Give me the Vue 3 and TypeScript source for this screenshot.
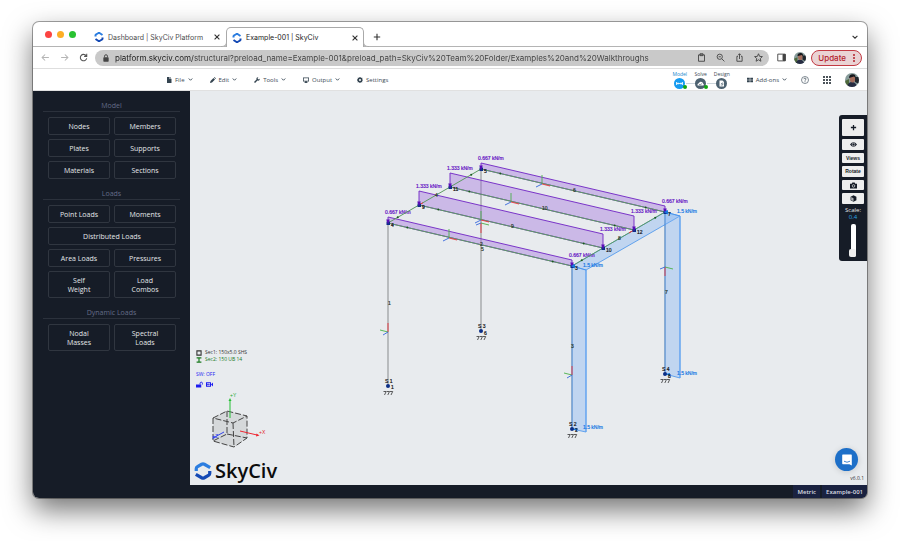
<script setup lang="ts">
import { ref } from 'vue'

type Point = [number, number]

interface MenuItem { label: string; icon: string; caret: boolean }
interface PanelButton { label: string; wide?: boolean; tall?: boolean }
interface PanelSection { title: string; buttons: PanelButton[] }
interface Beam { from: Point; to: Point; rise: Point; load: string }
interface Label { at: Point; text: string }
interface Triad { at: Point; red: Point; green: Point; blue: Point }

const address = ref('platform.skyciv.com/structural?preload_name=Example-001&preload_path=SkyCiv%20Team%20Folder/Examples%20and%20Walkthroughs')
const scale = ref(0.4)

const tabs = [
  { title: 'Dashboard | SkyCiv Platform', active: false },
  { title: 'Example-001 | SkyCiv', active: true },
]

const menus: MenuItem[] = [
  { label: 'File', icon: 'M2 0h5v4h4v8H2zM8 0l3 3H8z', caret: true },
  { label: 'Edit', icon: 'M0 12l1-4 6-6 3 3-6 6zM8 1l1-1 3 3-1 1z', caret: true },
  { label: 'Tools', icon: 'M0 10l5-5C4 2 6 0 9 0L7 2l1 2 2 1 2-2c0 3-2 5-5 4l-5 5z', caret: true },
  { label: 'Output', icon: 'M0 1h12v8H7.500v1.500H9V12H3v-1.500h1.500V9H0zM1.500 2.500v5h9v-5z', caret: true },
  { label: 'Settings', icon: 'M5 0h2l.4 1.600 1.200.5L10 1.200 11 2.500l-1 1.300.5 1.200 1.500.3v1.500l-1.500.4-.5 1.200L10.800 10l-1 1-1.400-.9-1.200.5L7 12H5l-.4-1.500-1.200-.5-1.400.9-1-1 .9-1.400-.5-1.200L0 7V5l1.500-.4L2 3.500 1.200 2l1-1 1.300.9 1.100-.4zM6 4a2 2 0 100 4 2 2 0 000-4z', caret: false },
]

const sections: PanelSection[] = [
  {
    title: 'Model',
    buttons: [
      { label: 'Nodes' }, { label: 'Members' }, { label: 'Plates' },
      { label: 'Supports' }, { label: 'Materials' }, { label: 'Sections' },
    ],
  },
  {
    title: 'Loads',
    buttons: [
      { label: 'Point Loads' }, { label: 'Moments' }, { label: 'Distributed Loads', wide: true },
      { label: 'Area Loads' }, { label: 'Pressures' },
      { label: 'Self Weight', tall: true }, { label: 'Load Combos', tall: true },
    ],
  },
  {
    title: 'Dynamic Loads',
    buttons: [{ label: 'Nodal Masses', tall: true }, { label: 'Spectral Loads', tall: true }],
  },
]

const beams: Beam[] = [
  { from: [481, 169], to: [665, 212], rise: [6, 6], load: '0.667 kN/m' },
  { from: [450, 187], to: [634, 230], rise: [14, 14], load: '1.333 kN/m' },
  { from: [419, 205], to: [603, 248], rise: [14, 14], load: '1.333 kN/m' },
  { from: [388, 223], to: [572, 266], rise: [6, 6], load: '0.667 kN/m' },
]

const columns: [Point, Point][] = [
  [[388, 223], [388, 386]],
  [[481, 169], [481, 331]],
  [[572, 266], [572, 429]],
  [[665, 212], [665, 374]],
]

const girders: [Point, Point][] = [
  [[388, 223], [481, 169]],
  [[572, 266], [665, 212]],
]

const windLoads = [
  '572,266 586,270 680,216 665,212',
  '665,212 680,216 680,378 665,374',
  '572,266 586,270 586,432 572,429',
]

const windLabels: Label[] = [
  { at: [583, 267], text: '1.5 kN/m' },
  { at: [677, 213], text: '1.5 kN/m' },
  { at: [583, 429], text: '1.5 kN/m' },
  { at: [677, 375], text: '1.5 kN/m' },
]

const nodeLabels: Label[] = [
  { at: [391, 227], text: '4' }, { at: [422, 209], text: '9' },
  { at: [453, 191], text: '11' }, { at: [484, 173], text: '5' },
  { at: [575, 270], text: '3' }, { at: [606, 252], text: '10' },
  { at: [637, 234], text: '12' }, { at: [668, 216], text: '7' },
  { at: [391, 389], text: '1' }, { at: [484, 335], text: '6' },
  { at: [575, 432], text: '2' }, { at: [668, 378], text: '8' },
]

const memberLabels: Label[] = [
  { at: [388, 305], text: '1' }, { at: [480, 246], text: '2' }, { at: [481, 251], text: '5' },
  { at: [571, 348], text: '3' }, { at: [665, 294], text: '7' }, { at: [435, 197], text: '4' },
  { at: [511, 228], text: '9' }, { at: [542, 210], text: '10' }, { at: [573, 192], text: '6' },
  { at: [618, 240], text: '8' },
]

const supports: Label[] = [
  { at: [388, 386], text: 'S 1' }, { at: [481, 331], text: 'S 3' },
  { at: [572, 429], text: 'S 2' }, { at: [665, 374], text: 'S 4' },
]

const beamAxes = (at: Point): Triad => ({ at, red: [8, 2], green: [0, -9], blue: [-6, 3] })
const triads: Triad[] = [
  beamAxes([449, 238]), beamAxes([481, 220]), beamAxes([511, 202]), beamAxes([542, 184]),
  { at: [481, 223], red: [0, 10], green: [8, 2], blue: [-5, 2] },
  { at: [665, 267], red: [0, 9], green: [8, 2], blue: [-5, 2] },
  { at: [388, 332], red: [0, -9], green: [-8, -2], blue: [-5, 3] },
  { at: [572, 375], red: [0, -9], green: [-8, -2], blue: [-5, 3] },
]

const along = (a: Point, b: Point, t: number): Point => [a[0] + (b[0] - a[0]) * t, a[1] + (b[1] - a[1]) * t]

const markers: Point[] = [...beams.map((b): [Point, Point] => [b.from, b.to]), ...girders]
  .flatMap(([a, b]) => [along(a, b, 0.105), along(a, b, 0.895)])

const loadArea = (b: Beam): string =>
  `${b.from.join()} ${b.from[0]},${b.from[1] - b.rise[0]} ${b.to[0]},${b.to[1] - b.rise[1]} ${b.to.join()}`

const joints: Point[] = beams.flatMap((b) => [b.from, b.to])
</script>

<template>
  <div class="stage">
    <div class="window">
      <header class="tabstrip">
        <div class="lights">
          <button class="light red" aria-label="Close window"></button>
          <button class="light amber" aria-label="Minimise window"></button>
          <button class="light green" aria-label="Zoom window"></button>
        </div>
        <div v-for="tab in tabs" :key="tab.title" class="tab" :class="{ active: tab.active }">
          <button class="tab-title">
            <svg class="favicon" viewBox="0 0 20 20" fill="none" stroke-width="4">
              <path d="M3 9V7q0-1 1-2l5-3q1-.6 2 0l6 4" stroke="#2b7de0" />
              <path d="M17 11v2q0 1-1 2l-5 3q-1 .6-2 0l-6-4" stroke="#1449b4" />
            </svg>
            <span>{{ tab.title }}</span>
          </button>
          <button class="glyph" aria-label="Close tab">
            <svg viewBox="0 0 10 10"><path d="M2 2l6 6M8 2l-6 6" /></svg>
          </button>
        </div>
        <button class="glyph plus" aria-label="New tab">
          <svg viewBox="0 0 10 10"><path d="M5 1v8M1 5h8" /></svg>
        </button>
        <button class="glyph tab-menu" aria-label="Search tabs">
          <svg viewBox="0 0 10 10"><path d="M2 3.500l3 3 3-3" /></svg>
        </button>
      </header>

      <div class="browserbar">
        <button class="nav" aria-label="Back"><svg viewBox="0 0 12 12"><path d="M10.500 6h-9M5.500 2l-4 4 4 4" /></svg></button>
        <button class="nav" aria-label="Forward"><svg viewBox="0 0 12 12"><path d="M1.500 6h9M6.500 2l4 4-4 4" /></svg></button>
        <button class="nav reload" aria-label="Reload"><svg viewBox="0 0 12 12"><path d="M9.500 3.500A4.300 4.300 0 1 0 10.300 7M10.300 1v3.500H6.800" /></svg></button>
        <div class="omnibox">
          <svg class="lock" viewBox="0 0 12 12"><rect x="2" y="5" width="8" height="6.500" rx="1" fill="#444" /><path d="M3.800 5V3.300a2.200 2.200 0 0 1 4.400 0V5" fill="none" stroke="#444" stroke-width="1.400" /></svg>
          <input v-model="address" class="address" type="text" aria-label="Address" spellcheck="false" />
          <button class="tool" aria-label="Clipboard"><svg viewBox="0 0 12 12"><path d="M2 2.500h8v8.500H2zM4 1h4v2.500H4z" /></svg></button>
          <button class="tool" aria-label="Zoom"><svg viewBox="0 0 12 12"><circle cx="5" cy="5" r="3.500" /><path d="M7.700 7.700l3.500 3.500M3.500 5h3" /></svg></button>
          <button class="tool" aria-label="Share"><svg viewBox="0 0 12 12"><path d="M4 4.500H2.500v6.500h7V4.500H8M6 8V1M4 3l2-2 2 2" /></svg></button>
          <button class="tool" aria-label="Bookmark"><svg viewBox="0 0 12 12"><path d="M6 1l1.500 3.500 3.700.3-2.800 2.500.8 3.700L6 9l-3.200 2 .8-3.700L.8 4.800l3.700-.3z" /></svg></button>
        </div>
        <button class="tool side" aria-label="Side panel"><svg viewBox="0 0 12 12"><path d="M1 1.500h10v9H1z" /><path d="M8 2h3v8H8z" fill="#444" /></svg></button>
        <button class="avatar small" aria-label="Profile">
          <svg viewBox="0 0 14 14"><path d="M0 0h14v14H0z" fill="#889c9b" /><path d="M0 8l4-2v8H0z" fill="#4e683b" /><path d="M2 14q1-5 5-5t5 5z" fill="#262c42" /><ellipse cx="7.500" cy="5.800" rx="2.800" ry="3.600" fill="#a66f5e" /><path d="M4 5q0-4 4-3.800Q11 1.500 10.500 5L9 3.500z" fill="#17191e" /><path d="M10 4h4v7l-4-2z" fill="#20262d" /></svg>
        </button>
        <button class="update"><span>Update</span><i class="dots"></i></button>
      </div>

      <nav class="appbar">
        <button v-for="menu in menus" :key="menu.label" class="menu">
          <svg class="menu-icon" viewBox="0 0 12 12"><path :d="menu.icon" fill-rule="evenodd" /></svg>
          <span>{{ menu.label }}</span>
          <svg v-if="menu.caret" class="caret" viewBox="0 0 10 10"><path d="M1.500 3L5 6.500 8.500 3" /></svg>
        </button>
        <div class="steps">
          <button class="step current">
            <span>Model</span>
            <svg viewBox="0 0 22 22"><circle cx="11" cy="11" r="11" fill="#159bf0" /><path d="M5 8v6M17 8v6M5 11h12M8 9v4M14 9v4" stroke="#fff" stroke-width="1.600" /></svg>
            <i class="done"></i>
          </button>
          <button class="step">
            <span>Solve</span>
            <svg viewBox="0 0 22 22"><circle cx="11" cy="11" r="11" fill="#4c6170" /><path d="M5 15q-1-4 3-5 2-4 6-2 2 1 2 3 3 1 1 4z" fill="#fff" /><path d="M8 12l2 2 4-3" fill="none" stroke="#4c6170" stroke-width="1.300" /></svg>
            <i class="done"></i>
          </button>
          <button class="step">
            <span>Design</span>
            <svg viewBox="0 0 22 22"><circle cx="11" cy="11" r="11" fill="#4c6170" /><path d="M7 5h6l3 3v9H7z" fill="#fff" /><path d="M9.500 14h4V9M10 11h2" fill="none" stroke="#4c6170" stroke-width="1.400" /></svg>
          </button>
        </div>
        <button class="menu addons">
          <svg class="menu-icon" viewBox="0 0 12 12"><path d="M0 1.500h5.500v4H0zM6.500 1.500H12v4H6.500zM0 6.500h5.500v4H0zM6.500 6.500H12v4H6.500z" /></svg>
          <span>Add-ons</span>
          <svg class="caret" viewBox="0 0 10 10"><path d="M1.500 3L5 6.500 8.500 3" /></svg>
        </button>
        <button class="round" aria-label="Help">
          <svg viewBox="0 0 16 16" fill="none" stroke="#4b5a66" stroke-width="1.400"><circle cx="8" cy="8" r="7" /><path d="M5.700 6.300Q6 4.200 8 4.200t2.200 1.900Q10.200 7.300 8 8.500v1" stroke-width="1.600" /><path d="M8 10.700v1.600" stroke-width="1.800" /></svg>
        </button>
        <button class="round" aria-label="Apps">
          <svg viewBox="0 0 16 16" fill="#4b5359"><path d="M0 0h4v4H0zM6 0h4v4H6zM12 0h4v4h-4zM0 6h4v4H0zM6 6h4v4H6zM12 6h4v4h-4zM0 12h4v4H0zM6 12h4v4H6zM12 12h4v4h-4z" /></svg>
        </button>
        <button class="avatar" aria-label="Account">
          <svg viewBox="0 0 14 14"><path d="M0 0h14v14H0z" fill="#889c9b" /><path d="M0 8l4-2v8H0z" fill="#4e683b" /><path d="M2 14q1-5 5-5t5 5z" fill="#262c42" /><ellipse cx="7.500" cy="5.800" rx="2.800" ry="3.600" fill="#a66f5e" /><path d="M4 5q0-4 4-3.800Q11 1.500 10.500 5L9 3.500z" fill="#17191e" /><path d="M10 4h4v7l-4-2z" fill="#20262d" /></svg>
        </button>
      </nav>

      <main class="workspace">
        <aside class="sidebar">
          <section v-for="section in sections" :key="section.title">
            <h2>{{ section.title }}</h2>
            <div class="grid">
              <button v-for="b in section.buttons" :key="b.label" :class="{ wide: b.wide, tall: b.tall }"><span>{{ b.label }}</span></button>
            </div>
          </section>
        </aside>

        <div class="canvas">
          <svg class="scene" viewBox="190 91 677 394" role="img" aria-label="Structural model">
            <g class="column"><line v-for="(c, i) in columns" :key="i" :x1="c[0][0]" :y1="c[0][1]" :x2="c[1][0]" :y2="c[1][1]" /></g>
            <polygon v-for="(w, i) in windLoads" :key="'w' + i" class="wind" :points="w" />
            <g class="wind-edge"><path d="M586 270v162M680 216v162" /></g>
            <g v-for="(b, i) in beams" :key="'b' + i">
              <polygon class="gravity" :points="loadArea(b)" />
              <line class="member" :x1="b.from[0]" :y1="b.from[1]" :x2="b.to[0]" :y2="b.to[1]" />
              <text class="load" :x="b.from[0] - 3" :y="b.from[1] - b.rise[0] - 3">{{ b.load }}</text>
              <text class="load" :x="b.to[0] - 3" :y="b.to[1] - b.rise[1] - 3">{{ b.load }}</text>
            </g>
            <line v-for="(g, i) in girders" :key="'g' + i" class="member" :x1="g[0][0]" :y1="g[0][1]" :x2="g[1][0]" :y2="g[1][1]" />
            <g v-for="(t, i) in triads" :key="'t' + i" class="triad" :transform="`translate(${t.at.join()})`">
              <line :x2="t.green[0]" :y2="t.green[1]" stroke="#4ab04a" />
              <line :x2="t.red[0]" :y2="t.red[1]" stroke="#ec3540" />
              <line :x2="t.blue[0]" :y2="t.blue[1]" stroke="#3465dc" />
            </g>
            <path class="hint" d="M419 205l4-2.300M634 230l-5 3" />
            <circle v-for="(m, i) in markers" :key="'m' + i" :cx="m[0]" :cy="m[1]" r="1" fill="#16571b" />
            <g v-for="(j, i) in joints" :key="'j' + i" :transform="`translate(${j.join()})`">
              <rect x="-1.500" y="-1.500" width="3.500" height="3.500" fill="#0b2f86" />
              <path d="M-1.800-3.500h3.600L0 1.500z" fill="#5a0db8" />
            </g>
            <path class="arrow" d="M571 266l4-2v4.500zM664 212l4-2v4.500zM572 429l5-1v3zM665 374l5-1v3z" />
            <g v-for="s in supports" :key="s.text">
              <circle :cx="s.at[0]" :cy="s.at[1]" r="2" fill="#0b2f86" />
              <text class="node" :x="s.at[0] - 3" :y="s.at[1] - 3">{{ s.text }}</text>
              <path class="hatch" :transform="`translate(${s.at.join()})`" d="M-4.500 5.500h2.700l-1.700 3.500M-1.200 5.500h2.700L-.2 9M2 5.500h2.700L3 9" />
            </g>
            <text v-for="l in memberLabels" :key="'ml' + l.text" class="member-no" :x="l.at[0]" :y="l.at[1]">{{ l.text }}</text>
            <text v-for="l in nodeLabels" :key="'nl' + l.text" class="node" :x="l.at[0]" :y="l.at[1]">{{ l.text }}</text>
            <text v-for="(l, i) in windLabels" :key="'wl' + i" class="wind-label" :x="l.at[0]" :y="l.at[1]">{{ l.text }}</text>
          </svg>

          <div class="legend">
            <p><svg viewBox="0 0 10 10"><path d="M1.500 1.500h7v7h-7z" fill="none" stroke="#333" stroke-width="1.800" /></svg>Sec1: 150x5.0 SHS</p>
            <p class="sec2"><svg viewBox="0 0 10 10"><path d="M1 1.500h8M1 8.500h8M5 1.500v7" stroke="#187a1e" stroke-width="2" /></svg>Sec2: 150 UB 14</p>
            <p class="weight">SW: OFF</p>
            <p class="toggles">
              <svg viewBox="0 0 12 12"><path d="M0 6h9v5H0z" fill="#1c1cf0" /><path d="M7 6V4q0-2 2-2t2 2v2" fill="none" stroke="#1c1cf0" stroke-width="1.600" /></svg>
              <svg viewBox="0 0 14 12"><path d="M0 1.500h10v9H0zM10 6l4-4v8z" fill="#1c1cf0" /><path d="M2 4h6M2 8h6M4 3v6M7 3v6" stroke="#e8ebee" /></svg>
            </p>
            <svg class="cube" viewBox="208 390 60 60">
              <path d="M213 417l14-7 20 5v22l-13 9-21-6z" fill="#cfd1d3" fill-opacity=".75" />
              <path d="M213 417l14-7 20 5-14 7zM213 417v23l21 6 13-9v-22M233 422l1 24M227 410v23l-14 7M227 433l20 4" fill="none" stroke="#444" stroke-dasharray="6 2" />
              <path d="M230 417v-17" stroke="#25bf35" /><path d="M228.500 400l1.500-3 1.500 3z" fill="#25bf35" />
              <path d="M240 430l17 4" stroke="#ee2630" /><path d="M256.500 432.500l3 2-3.500 1z" fill="#ee2630" />
              <path d="M224 431l-11 6" stroke="#3344ee" /><path d="M212 438l2-3 1 2z" fill="#3344ee" />
              <text x="230" y="396" fill="#19a62b">+Y</text><text x="259" y="433" fill="#e31f2a">+X</text><text x="212" y="437" fill="#3344ee">+Z</text>
            </svg>
            <div class="brand">
              <svg viewBox="0 0 20 20" fill="none" stroke-width="3.600">
                <path d="M2.500 10V7.500q0-1.500 1-2l5-3q1.500-.8 3 0l6.500 3.800" stroke="#2b7de0" />
                <path d="M17.500 10v2.500q0 1.500-1 2l-5 3q-1.500.8-3 0L2 13.700" stroke="#1449b4" />
              </svg>
              <span>SkyCiv</span>
            </div>
          </div>

          <div class="viewtools">
            <div class="view-buttons">
              <button class="big" aria-label="Add"><svg viewBox="0 0 12 12"><path d="M6 1.500v9M1.500 6h9" stroke="#161c27" stroke-width="2.200" /></svg></button>
              <button aria-label="Visibility"><svg viewBox="0 0 12 12"><path d="M0 6q6-8 12 0-6 8-12 0z" fill="#161c27" /><circle cx="6" cy="6" r="2.300" fill="#161c27" stroke="#eee" /></svg></button>
              <button>Views</button>
              <button>Rotate</button>
              <button aria-label="Screenshot"><svg viewBox="0 0 12 12"><path d="M0 3h3l1-2h4l1 2h3v8H0z" fill="#161c27" /><circle cx="6" cy="6.700" r="2.200" fill="none" stroke="#eee" stroke-width="1.200" /></svg></button>
              <button aria-label="Render"><svg viewBox="0 0 12 12"><path d="M6 .5l5 2.500v6l-5 2.500L1 9V3z" fill="#161c27" /><path d="M2 3.500L6 5.500v5L2 8.500z" fill="#eee" opacity=".7" /></svg></button>
            </div>
            <label for="scale">Scale:</label>
            <output for="scale">{{ scale }}</output>
            <input id="scale" v-model.number="scale" type="range" min="0.4" max="5" step="0.1" />
          </div>

          <button class="chat" aria-label="Open chat">
            <svg viewBox="0 0 20 20"><path d="M3 1h14q1 0 1 1v17l-4-2H3q-1 0-1-1V2q0-1 1-1z" fill="#fff" /><path d="M5 12q5 3.500 10 0" fill="none" stroke="#1d6fc8" stroke-width="1.400" /></svg>
          </button>
          <span class="version">v6.0.1</span>
        </div>
      </main>

      <footer class="statusbar"><button>Metric</button><button>Example-001</button></footer>
    </div>
  </div>
</template>

<style>
body { background: #fff; }
</style>

<style scoped>
* { box-sizing: border-box; }
button { margin: 0; padding: 0; border: 0; background: none; font: inherit; color: inherit; cursor: pointer; }
svg { display: block; flex: none; }
.stage { display: flex; min-height: 100vh; padding: 22px 33px 43px; font-family: "Open Sans", "Noto Sans", sans-serif; }
.window { flex: 1; min-width: 0; display: flex; flex-direction: column; overflow: hidden; border-radius: 6px; background: #fff; box-shadow: 0 0 0 1px rgba(0, 0, 0, .35), 0 12px 28px rgba(0, 0, 0, .55); }

.tabstrip { display: flex; align-items: flex-end; height: 25px; padding: 0 8px 0 12px; border-bottom: 1px solid #b4b4b4; font: 7px Inter, sans-serif; }
.lights { display: flex; gap: 5px; align-self: center; margin-right: 12px; }
.light { width: 7px; height: 7px; border-radius: 50%; }
.red { background: #fc4442; }
.amber { background: #fdae25; }
.green { background: #29c231; }
.tab { position: relative; display: flex; align-items: center; justify-content: space-between; width: 138px; height: 19px; padding: 0 4px 0 5px; border: 1px solid transparent; border-bottom: 0; color: #4c4c4c; }
.tab.active { margin-bottom: -1px; height: 20px; border-color: #a9a9a9; border-radius: 5px 5px 0 0; background: #fff; color: #222; }
.tab.active::before, .tab.active::after { content: ""; position: absolute; bottom: 0; width: 5px; height: 5px; border: 0 solid #a9a9a9; background: #fff; }
.tab.active::before { right: 100%; border-width: 0 1px 1px 0; border-radius: 0 0 5px 0; }
.tab.active::after { left: 100%; border-width: 0 0 1px 1px; border-radius: 0 0 0 5px; }
.tab-title { display: flex; align-items: center; gap: 4px; }
.favicon { width: 10px; height: 10px; }
.glyph svg { width: 8px; height: 8px; fill: none; stroke: #333; stroke-width: 1.400; }
.plus, .tab-menu { padding-bottom: 5px; }
.plus { margin-left: 9px; }
.tab-menu { margin-left: auto; }

.browserbar { display: flex; align-items: center; gap: 8px; height: 22px; padding: 0 5px 0 8px; border-bottom: 1px solid #dedede; }
.nav svg { width: 9px; height: 9px; fill: none; stroke: #b5b5b5; stroke-width: 1.400; }
.nav { margin-right: 2px; }
.nav.reload svg { stroke: #555; }
.nav.reload { margin-right: -1px; }
.omnibox { flex: 1; display: flex; align-items: center; gap: 10px; height: 16px; padding: 0 6px 0 7px; border-radius: 8px; background: #c9c9c9; }
.lock { width: 8px; height: 8px; margin-right: -5px; }
.address { flex: 1; min-width: 0; height: 14px; padding: 0; border: 0; outline: 0; background: linear-gradient(to right, #1c1c1c 78px, #404040 78px); background-clip: text; color: transparent; font: 8px Inter, sans-serif; }
.tool svg { width: 9px; height: 9px; fill: none; stroke: #444; stroke-width: 1.200; }
.avatar { width: 14px; height: 14px; overflow: hidden; border-radius: 50%; }
.avatar.small { width: 12px; height: 12px; margin-right: -3px; }
.update { display: flex; align-items: center; gap: 7px; height: 16px; padding: 0 6px; border: 1px solid #c23a43; border-radius: 8px; background: #ead3d4; color: #b3202b; font: 500 8px Inter, sans-serif; }
.dots { width: 2px; height: 2px; border-radius: 1px; background: #b3202b; box-shadow: 0 -3px #b3202b, 0 3px #b3202b; }

.appbar { display: flex; align-items: center; gap: 17px; height: 22px; padding: 0 8px 0 133px; border-bottom: 1px solid #e1e1e1; color: #3c4a55; font-size: 6px; }
.menu { display: flex; align-items: center; gap: 3px; }
.menu-icon { width: 6px; height: 6px; fill: #344450; }
.caret { width: 5px; height: 5px; fill: none; stroke: #344450; stroke-width: 1.800; }
.steps { display: flex; gap: 5px; margin-left: auto; font-size: 5px; }
.step { position: relative; display: flex; flex-direction: column; align-items: center; width: 16px; line-height: 7px; }
.step svg { position: relative; width: 11px; height: 11px; }
.step + .step::before { content: ""; position: absolute; right: 13px; bottom: 5px; width: 10px; height: 1px; background: #ccd5dc; }
.step.current { color: #1787cc; }
.done { position: absolute; right: 1px; bottom: 0; width: 4px; height: 4px; border-radius: 50%; background: #12a512; }
.addons { margin-right: -3px; }
.round svg { width: 8px; height: 8px; }
.round { margin-right: -3px; }

.workspace { flex: 1; display: flex; min-height: 0; }
.sidebar { width: 157px; padding: 0 10px; background: #161c27; }
.sidebar h2 { margin: 0; padding-top: 10px; border-bottom: 1px solid #2b313c; color: #646c88; font-size: 7px; font-weight: 400; line-height: 10px; text-align: center; }
.grid { display: grid; grid-template-columns: 1fr 1fr; gap: 4px; padding: 5px 4px 0 5px; }
.grid button { display: flex; align-items: center; justify-content: center; height: 18px; border: 1px solid #303640; border-radius: 2px; color: #e4e7ea; font-size: 7px; line-height: 9px; }
.grid .wide { grid-column: span 2; }
.grid .tall { height: 27px; padding: 0 16px; }

.canvas { position: relative; flex: 1; min-width: 0; display: flex; background: #e8ebee; }
.scene { width: 100%; height: auto; font: 5px "Liberation Sans", sans-serif; }
.scene text { stroke: currentColor; stroke-width: .2; fill: currentColor; }
.column { stroke: #888b8d; stroke-width: 1; }
.triad { stroke-width: .9; }
.wind { fill: #7fb4f5; fill-opacity: .38; stroke: #4492ec; stroke-width: .8; }
.wind-edge { fill: none; stroke: #62a5f2; stroke-width: 1; }
.gravity { fill: #a06fdc; fill-opacity: .4; stroke: #6f24c4; stroke-width: .9; }
.member { stroke: #5d9b62; stroke-width: 1; }
.hint { stroke: #f0303a; }
.hatch { fill: none; stroke: #333; stroke-width: .8; }
.arrow { fill: #1678e4; }
.load { color: #6412c4; }
.node { color: #111; }
.member-no { color: #2b3a2f; }
.wind-label { color: #1678e4; }

.legend { position: absolute; left: 4px; bottom: 2px; color: #333; font-size: 5px; line-height: 7px; }
.legend p { display: flex; align-items: center; gap: 3px; margin: 0 0 0 2px; }
.legend p svg { width: 6px; height: 6px; }
.legend .sec2 { color: #187a1e; }
.legend .weight { margin-top: 8px; color: #1c1cf0; }
.legend .toggles { margin-top: 3px; }
.legend .toggles svg { width: 7px; height: 7px; }
.cube { width: 60px; height: 60px; margin: 3px 0 8px 14px; font: 5px "Liberation Sans", sans-serif; }
.brand { display: flex; align-items: center; gap: 3px; color: #0c0c0c; font-size: 20px; font-weight: 600; line-height: 24px; }
.brand svg { width: 18px; height: 20px; }

.viewtools { position: absolute; top: 24px; right: 0; display: flex; flex-direction: column; align-items: center; width: 28px; padding: 4px 3px; border-radius: 3px 0 0 3px; background: #161c27; color: #e8e8e8; font-size: 6px; line-height: 7px; }
.view-buttons { display: flex; flex-direction: column; gap: 3px; width: 100%; height: 85px; margin-bottom: 3px; }
.view-buttons button { flex: 1; display: flex; align-items: center; justify-content: center; border-radius: 1px; background: #eee; color: #161c27; font: 700 5px "Liberation Sans", sans-serif; }
.view-buttons .big { flex: 0 0 17px; }
.view-buttons svg { width: 7px; height: 7px; }
.viewtools output { color: #2ba6e8; }
.viewtools input { appearance: none; writing-mode: vertical-lr; direction: rtl; width: 5px; height: 33px; margin: 3px 0 0; border-radius: 2px; background: #fff; }
.viewtools input::-webkit-slider-thumb { appearance: none; width: 7px; height: 8px; margin-left: -1px; border-radius: 2px; background: #eee; }

.chat { position: absolute; right: 9px; bottom: 14px; display: flex; align-items: center; justify-content: center; width: 23px; height: 23px; border-radius: 50%; background: #1d6fc8; box-shadow: 0 1px 6px rgba(0, 0, 0, .15); }
.chat svg { width: 12px; height: 12px; }
.version { position: absolute; right: 3px; bottom: 3px; color: #333; font-size: 5px; line-height: 7px; }

.statusbar { display: flex; justify-content: flex-end; gap: 2px; height: 13px; background: #161c27; color: #d9dce2; font-size: 6px; font-weight: 600; }
.statusbar button { padding: 0 4px; background: #1a2240; }
</style>
